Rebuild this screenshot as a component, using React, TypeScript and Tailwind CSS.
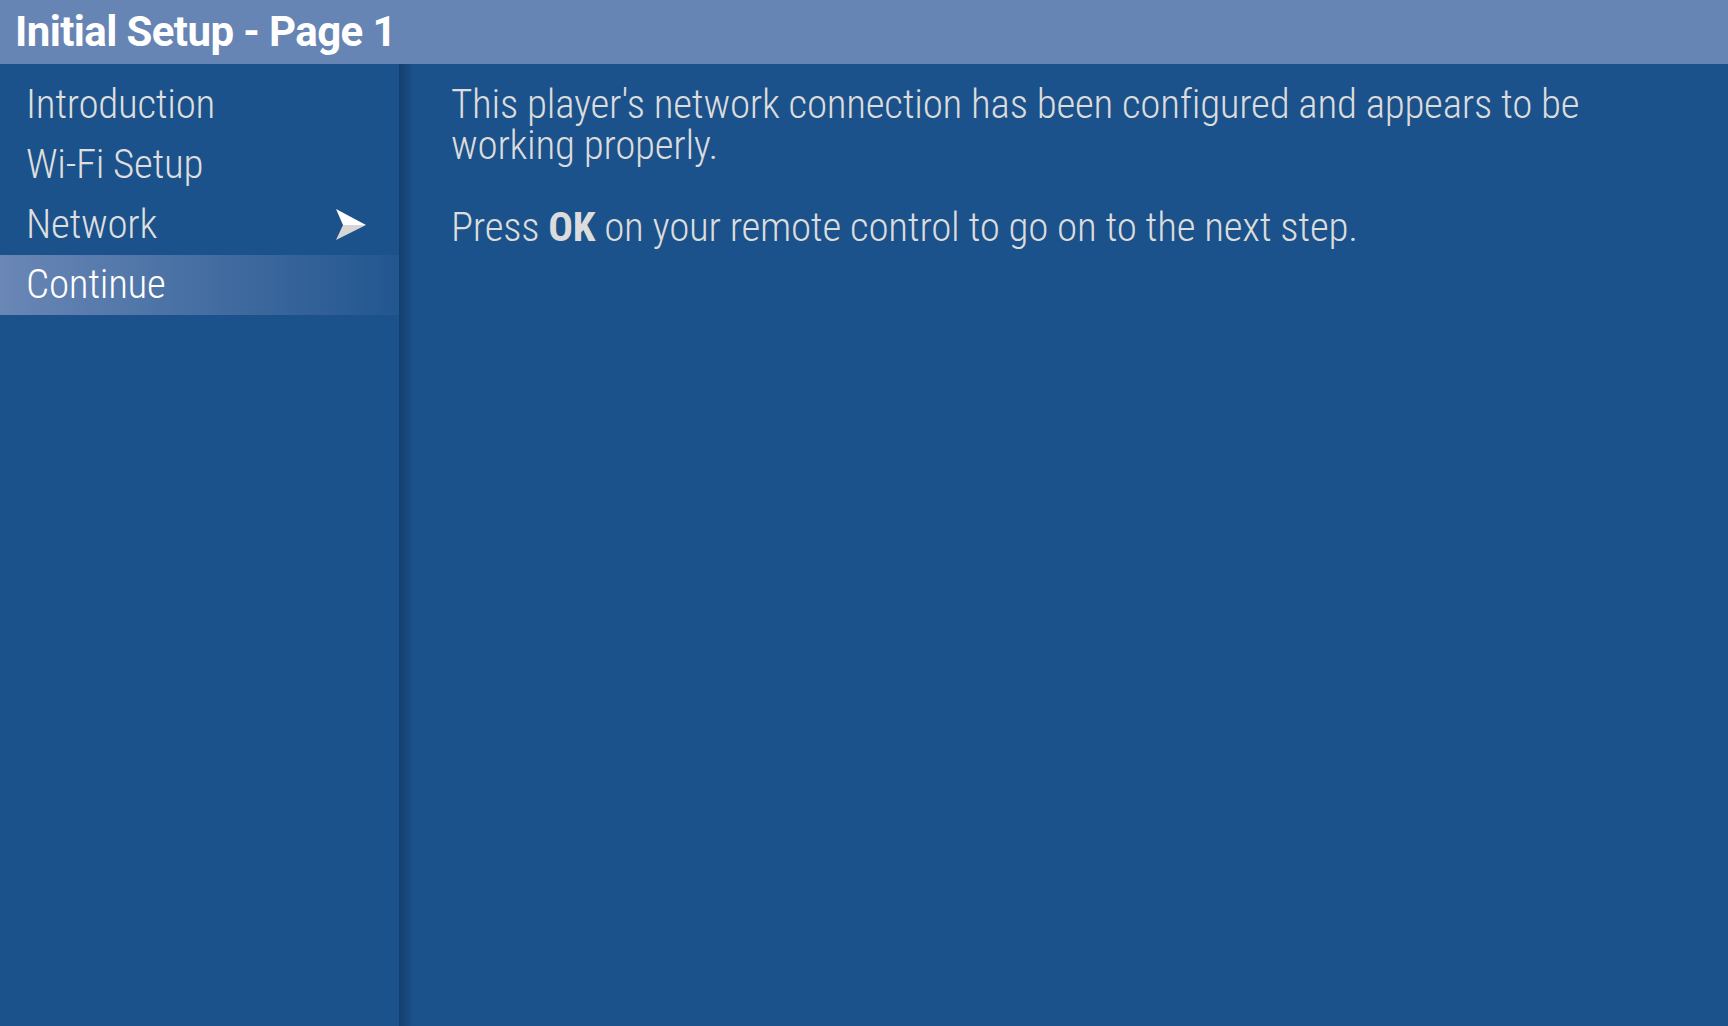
const menu = ['Introduction', 'Wi-Fi Setup', 'Network', 'Continue'];

const NavArrow = () => (
  <svg width="32" height="32" viewBox="0 0 32 32">
    <polygon points="1,0 31,16 8,16" fill="#ffffff" />
    <polygon points="8,16 31,16 1,31" fill="#d6d6d6" />
  </svg>
);

const App = () => {
  return (
    <div className="w-full h-[1026px] flex flex-col bg-[#1b528b] overflow-hidden font-['Roboto_Condensed','Liberation_Sans_Narrow','DejaVu_Sans_Condensed',sans-serif]">
      {/* Title bar */}
      <div className="h-[64px] shrink-0 bg-[#6785b4] flex items-center pl-[15px]">
        <h1 className="text-white font-bold text-[42px] leading-none tracking-[-0.6px] font-['Roboto','Liberation_Sans',sans-serif]">
          Initial Setup - Page 1
        </h1>
      </div>

      <div className="flex flex-1 min-h-0">
        {/* Menu */}
        <div className="w-[399px] shrink-0 pt-[11px]">
          {menu.map((item) => {
            const selected = item === 'Continue';
            return (
              <div
                key={item}
                className={
                  selected
                    ? 'h-[60px] pl-[26px] flex items-center text-white text-[41px] tracking-[-0.3px] font-light bg-[linear-gradient(to_right,#6a87b6,#22568f)]'
                    : 'h-[60px] pl-[26px] pr-[32px] flex items-center justify-between text-[#dedede] text-[41px] tracking-[-0.3px] font-light'
                }
              >
                <span>{item}</span>
                {item === 'Network' && <NavArrow />}
              </div>
            );
          })}
        </div>

        {/* Content */}
        <div className="flex-1 pl-[52px] pr-[100px] pt-[20px] text-[#dcdcdc] text-[41px] leading-[41px] tracking-[-0.25px] font-light bg-[linear-gradient(to_right,#143e6c,#1b528b_15px)]">
          <p>This player's network connection has been configured and appears to be working properly.</p>
          <p className="mt-[41px]">
            Press <span className="font-bold">OK</span> on your remote control to go on to the next step.
          </p>
        </div>
      </div>
    </div>
  );
};

export default App;
